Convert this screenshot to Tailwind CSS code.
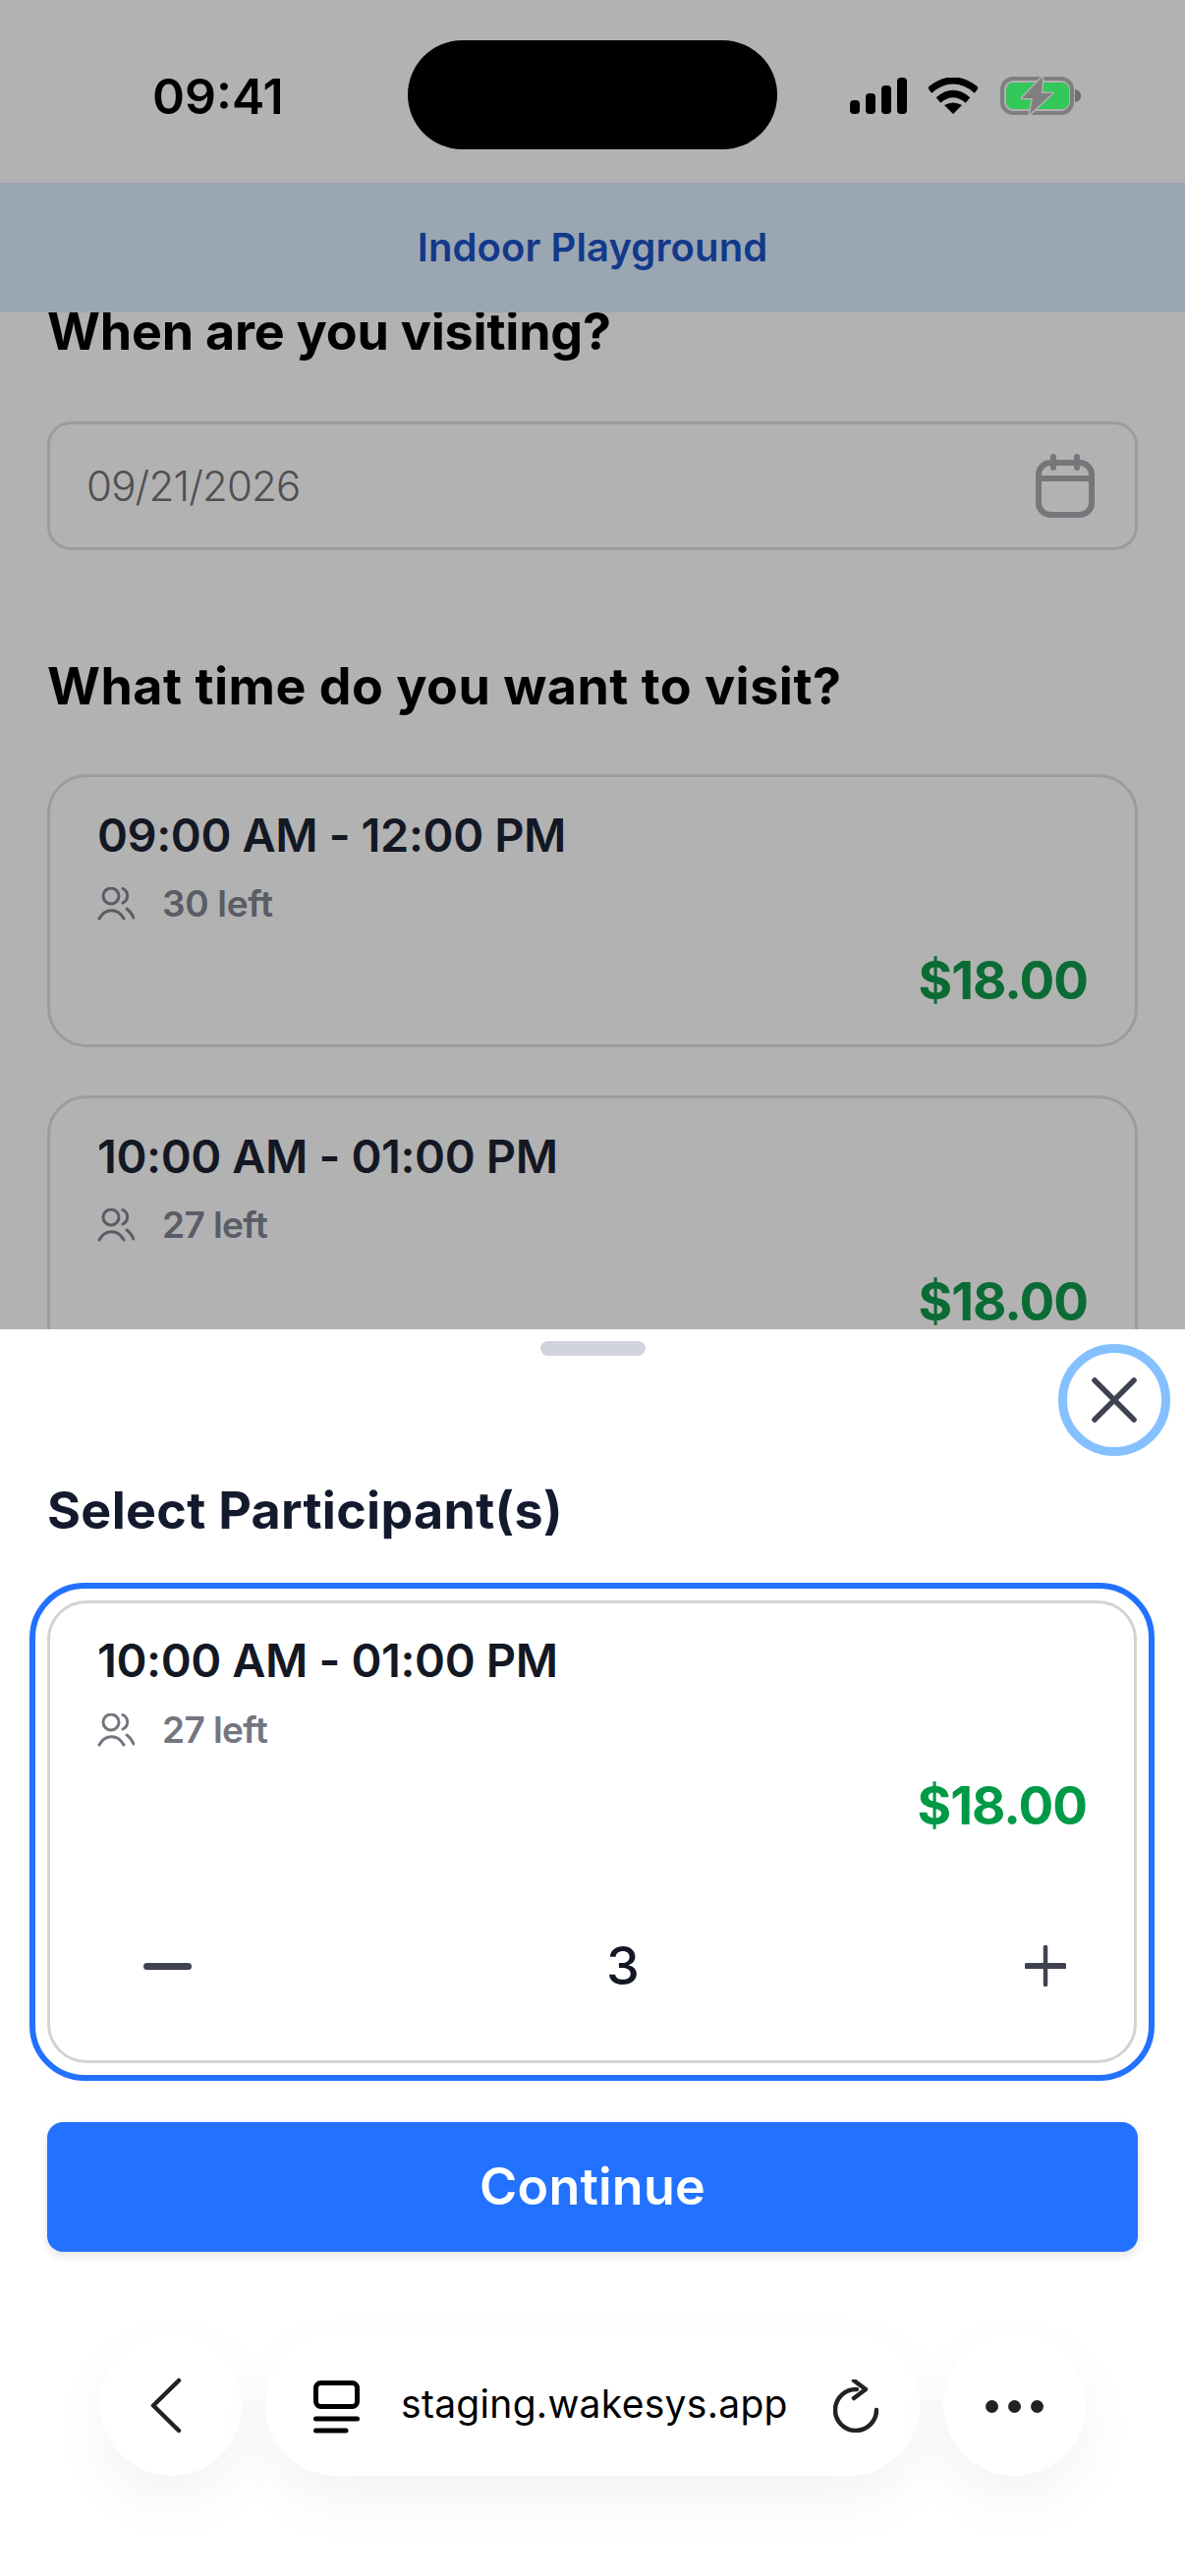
<!DOCTYPE html>
<html lang="en">
<head>
    <meta charset="UTF-8">
    <meta name="viewport" content="width=device-width, initial-scale=1.0">
    <title>Select Participants</title>
    <script src="https://cdn.jsdelivr.net/npm/@tailwindcss/browser@4"></script>
</head>
<body class="m-0">
<div class="relative w-[1206px] h-[2622px] overflow-hidden bg-[#b2b2b2] font-['Inter',sans-serif]">

    <!-- Status bar -->
    <div class="relative h-[186px] flex items-start">
        <div class="mt-[68px] ml-[155px] w-[135px] text-[50px] leading-[60px] font-semibold text-black">09:41</div>
        <div class="mt-[41px] ml-[125px] w-[376px] h-[111px] rounded-[56px] bg-black"></div>
        <svg class="mt-[79px] ml-[74px]" width="58" height="37" viewBox="0 0 58 37" fill="#000">
            <rect x="0" y="23" width="10" height="14" rx="4"/>
            <rect x="16" y="16" width="10" height="21" rx="4"/>
            <rect x="32" y="8" width="10" height="29" rx="4"/>
            <rect x="48" y="0" width="10" height="37" rx="4"/>
        </svg>
        <svg class="mt-[79px] ml-[22px]" width="50" height="37" viewBox="0 0 50 37" fill="none" stroke="#000">
            <path d="M1 13 Q25 -7 49 13" stroke-width="7"/>
            <path d="M10 23 Q25 10 40 23" stroke-width="7"/>
            <path d="M16 28 Q25 23 34 28 L25 37 Z" fill="#000" stroke="none"/>
        </svg>
        <svg class="mt-[78px] ml-[23px]" width="82" height="39" viewBox="0 0 82 39" fill="none">
            <rect x="2" y="2" width="71" height="35" rx="11" stroke="#7f7f7f" stroke-width="4"/>
            <rect x="6" y="6" width="64" height="27" rx="7" fill="#34c759"/>
            <path d="M76 13 Q82 14 82 19.5 Q82 25 76 26 Z" fill="#6f6f6f"/>
            <path d="M43 0 L22 22 L33 22 L30 38 L53 17 L42 17 Z" fill="#7f7f7f" stroke="#b2b2b2" stroke-width="3" paint-order="stroke" stroke-linejoin="round"/>
        </svg>
    </div>

    <!-- Header -->
    <div class="relative z-10 h-[132px] bg-[#9ba6b3] flex items-center justify-center">
        <span class="text-[40px] leading-[50px] font-semibold text-[#12398a] tracking-[0.1px]">Indoor Playground</span>
    </div>

    <!-- Dimmed page behind the sheet -->
    <div class="mt-[-10px] px-[48px]">
        <h2 class="text-[52px] leading-[60px] font-bold text-black tracking-[-0.2px]">When are you visiting?</h2>
        <div class="mt-[61px] h-[131px] border-[3px] border-[#9c9c9c] rounded-[24px] pl-[37px] pr-[41px] flex items-center justify-between">
            <span class="text-[42px] font-light text-[#4f4f54] tracking-[-0.8px]">09/21/2026</span>
            <svg width="60" height="65" viewBox="0 0 60 65" fill="none" stroke="#76767b" stroke-width="6" stroke-linecap="round">
                <rect x="3" y="9" width="54" height="53" rx="12"/>
                <path d="M3 25 H57"/>
                <path d="M18 3 V14"/>
                <path d="M42 3 V14"/>
            </svg>
        </div>
        <h2 class="mt-[109px] text-[52px] leading-[60px] font-bold text-black tracking-[0.5px]">What time do you want to visit?</h2>

        <div class="mt-[59px] h-[278px] border-[3px] border-[#9c9c9c] rounded-[40px] pl-[48px] pr-[48px] pt-[31px]">
            <div class="text-[47px] leading-[56px] font-semibold text-[#141824] tracking-[-0.4px]">09:00 AM - 12:00 PM</div>
            <div class="mt-[22px] h-[40px] flex items-center">
                <svg width="38" height="34" viewBox="0 0 38 34" fill="none" stroke="#5a5c66" stroke-width="3" stroke-linecap="round">
                    <circle cx="14" cy="9" r="8"/>
                    <path d="M26 1.5 A8 8 0 0 1 26 16"/>
                    <path d="M2 32 C8 21 21 21 27 32"/>
                    <path d="M30 22 C33 24 35 27 37 31"/>
                </svg>
                <span class="ml-[28px] text-[37px] font-semibold text-[#5a5c66] tracking-[-0.3px]">30 left</span>
            </div>
            <div class="mt-[28px] h-[60px] text-right text-[53px] leading-[60px] font-bold text-[#0b6b34] tracking-[-1px]">$18.00</div>
        </div>

        <div class="mt-[49px] h-[278px] border-[3px] border-[#9c9c9c] rounded-[40px] pl-[48px] pr-[48px] pt-[31px]">
            <div class="text-[47px] leading-[56px] font-semibold text-[#141824] tracking-[-0.4px]">10:00 AM - 01:00 PM</div>
            <div class="mt-[22px] h-[40px] flex items-center">
                <svg width="38" height="34" viewBox="0 0 38 34" fill="none" stroke="#5a5c66" stroke-width="3" stroke-linecap="round">
                    <circle cx="14" cy="9" r="8"/>
                    <path d="M26 1.5 A8 8 0 0 1 26 16"/>
                    <path d="M2 32 C8 21 21 21 27 32"/>
                    <path d="M30 22 C33 24 35 27 37 31"/>
                </svg>
                <span class="ml-[28px] text-[37px] font-semibold text-[#5a5c66] tracking-[-0.6px]">27 left</span>
            </div>
            <div class="mt-[28px] h-[60px] text-right text-[53px] leading-[60px] font-bold text-[#0b6b34] tracking-[-1px]">$18.00</div>
        </div>
    </div>

    <!-- Bottom sheet -->
    <div class="absolute left-0 right-0 bottom-0 h-[1269px] bg-white pt-[12px]">
        <div class="mx-auto w-[107px] h-[15px] rounded-full bg-[#d1d5db]"></div>

        <button class="absolute top-[15px] right-[15px] w-[114px] h-[114px] rounded-full border-[9px] border-[#85c0ff] flex items-center justify-center">
            <svg width="46" height="46" viewBox="0 0 46 46" fill="none" stroke="#3f4351" stroke-width="5.5" stroke-linecap="round">
                <path d="M3 3 L43 43"/>
                <path d="M43 3 L3 43"/>
            </svg>
        </button>

        <h2 class="mt-[128px] ml-[48px] text-[52px] leading-[60px] font-bold text-[#141a2e] tracking-[0.3px]">Select Participant(s)</h2>

        <div class="mt-[43px] ml-[30px] w-[1145px] h-[507px] border-[6px] border-[#2272ff] rounded-[56px] p-[12px]">
            <div class="h-[471px] border-[3px] border-[#d1d3d6] rounded-[40px] pl-[48px] pr-[48px] pt-[30px]">
                <div class="text-[47px] leading-[56px] font-semibold text-[#141824] tracking-[-0.4px]">10:00 AM - 01:00 PM</div>
                <div class="mt-[23px] h-[40px] flex items-center">
                    <svg width="38" height="34" viewBox="0 0 38 34" fill="none" stroke="#74767f" stroke-width="3" stroke-linecap="round">
                        <circle cx="14" cy="9" r="8"/>
                        <path d="M26 1.5 A8 8 0 0 1 26 16"/>
                        <path d="M2 32 C8 21 21 21 27 32"/>
                        <path d="M30 22 C33 24 35 27 37 31"/>
                    </svg>
                    <span class="ml-[28px] text-[37px] font-semibold text-[#74767f] tracking-[-0.6px]">27 left</span>
                </div>
                <div class="mt-[27px] h-[60px] text-right text-[53px] leading-[60px] font-bold text-[#009a47] tracking-[-1px]">$18.00</div>
                <div class="mt-[103px] h-[60px] pl-[47px] pr-[21px] flex items-center">
                    <div class="w-[49px] h-[7px] rounded-full bg-[#3f4351]"></div>
                    <span class="ml-[422px] text-[54px] leading-[60px] font-medium text-[#141824]">3</span>
                    <svg class="ml-auto" width="42" height="42" viewBox="0 0 42 42" fill="none" stroke="#3f4351" stroke-linecap="round">
                        <path d="M21 2 V40" stroke-width="4.5"/>
                        <path d="M2 21 H40" stroke-width="6"/>
                    </svg>
                </div>
            </div>
        </div>

        <button class="mt-[42px] ml-[48px] w-[1110px] h-[132px] rounded-[16px] bg-[#2272ff] shadow-[0_4px_10px_rgba(0,0,0,0.12)] text-[52px] font-semibold text-white tracking-[0.2px]">Continue</button>

        <!-- Browser toolbar -->
        <div class="mt-[83px] pl-[102px] flex gap-[24px]">
            <div class="w-[144px] h-[145px] rounded-full bg-white shadow-[0_24px_60px_rgba(0,0,0,0.05)] flex items-center justify-center">
                <svg class="mt-[2px] mr-[10px]" width="34" height="57" viewBox="0 0 34 57" fill="none" stroke="#222" stroke-width="4.5" stroke-linecap="round" stroke-linejoin="round">
                    <path d="M30 3 L4 28.5 L30 54"/>
                </svg>
            </div>
            <div class="w-[666px] h-[145px] rounded-full bg-white shadow-[0_24px_60px_rgba(0,0,0,0.05)] pl-[49px] flex items-center">
                <svg class="mt-[6px]" width="47" height="56" viewBox="0 0 47 56" fill="none" stroke="#000" stroke-width="5" stroke-linecap="round">
                    <rect x="2.5" y="2.5" width="42" height="24" rx="5"/>
                    <path d="M2.5 39 H44.5"/>
                    <path d="M2.5 51 H33"/>
                </svg>
                <span class="ml-[42px] text-[39px] text-black tracking-[0.3px]">staging.wakesys.app</span>
                <svg class="ml-auto mr-[42px] mt-[2px]" width="46" height="54" viewBox="0 0 46 54" fill="none" stroke="#222" stroke-width="4.5" stroke-linecap="round" stroke-linejoin="round">
                    <path d="M24 10 A21 21 0 1 0 44 31"/>
                    <path d="M21 1 L33 10 L21 19"/>
                </svg>
            </div>
            <div class="w-[145px] h-[145px] rounded-full bg-white shadow-[0_24px_60px_rgba(0,0,0,0.05)] flex items-center justify-center gap-[10px]">
                <div class="mt-[4px] w-[13px] h-[13px] rounded-full bg-[#222]"></div>
                <div class="mt-[4px] w-[13px] h-[13px] rounded-full bg-[#222]"></div>
                <div class="mt-[4px] w-[13px] h-[13px] rounded-full bg-[#222]"></div>
            </div>
        </div>
    </div>
</div>
</body>
</html>
